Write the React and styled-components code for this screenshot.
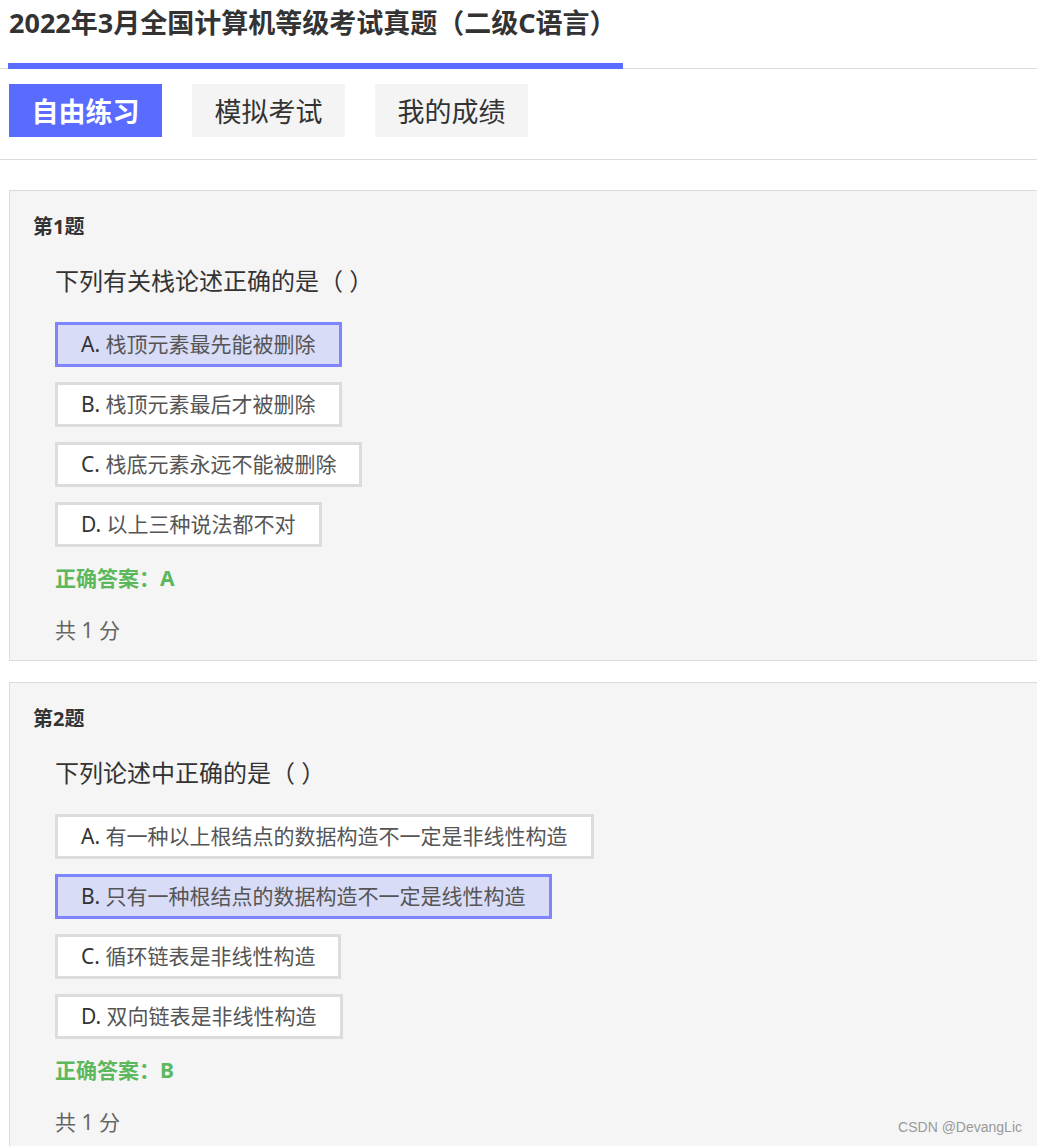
import React from "react";
import styled, { createGlobalStyle } from "styled-components";

const FONT = `"Noto Sans", "Noto Sans CJK SC", sans-serif`;

const GlobalStyle = createGlobalStyle`
  html, body {
    margin: 0;
    padding: 0;
    background: #fff;
    overflow-x: hidden;
  }
  body {
    font-family: ${FONT};
    color: #333;
  }
`;

const questions = [
  {
    no: 1,
    title: "下列有关栈论述正确的是（ ）",
    options: [
      "栈顶元素最先能被删除",
      "栈顶元素最后才被删除",
      "栈底元素永远不能被删除",
      "以上三种说法都不对",
    ],
    answer: "A",
    score: 1,
  },
  {
    no: 2,
    title: "下列论述中正确的是（ ）",
    options: [
      "有一种以上根结点的数据构造不一定是非线性构造",
      "只有一种根结点的数据构造不一定是线性构造",
      "循环链表是非线性构造",
      "双向链表是非线性构造",
    ],
    answer: "B",
    score: 1,
  },
];

const letters = ["A", "B", "C", "D"];

export default function App() {
  return (
    <>
      <GlobalStyle />
      <Page>
        <Header>
          <Title>2022年3月全国计算机等级考试真题（二级C语言）</Title>
        </Header>
        <TabBar>
          <Tab active>自由练习</Tab>
          <Tab>模拟考试</Tab>
          <Tab>我的成绩</Tab>
        </TabBar>
        <List>
          {questions.map((q) => (
            <Card key={q.no}>
              <Label>第{q.no}题</Label>
              <Question>{q.title}</Question>
              <Options>
                {q.options.map((text, i) => (
                  <Option key={i} selected={letters[i] === q.answer}>
                    <Letter>{letters[i]}.</Letter> {text}
                  </Option>
                ))}
              </Options>
              <Answer>正确答案：{q.answer}</Answer>
              <Score>共 {q.score} 分</Score>
            </Card>
          ))}
        </List>
        <Watermark>CSDN @DevangLic</Watermark>
      </Page>
    </>
  );
}

const Page = styled.div`
  position: relative;
  width: 100%;
  min-height: 1146px;
  overflow: hidden;
`;

const Header = styled.div`
  border-bottom: 1px solid #dcdcdc;
  padding-left: 8px;
`;

const Title = styled.div`
  display: inline-block;
  width: 615px;
  padding-left: 1px;
  box-sizing: border-box;
  font-size: 27px;
  font-weight: 700;
  line-height: 45px;
  color: #333;
  padding-bottom: 18px;
  border-bottom: 6px solid #5a6cff;
  margin-bottom: -1px;
  white-space: nowrap;
`;

const TabBar = styled.div`
  display: flex;
  gap: 30px;
  padding: 15px 0 22px 9px;
  border-bottom: 1px solid #dcdcdc;
`;

const Tab = styled.div`
  width: 153px;
  height: 53px;
  display: flex;
  align-items: center;
  justify-content: center;
  font-size: 27px;
  font-weight: ${(p) => (p.active ? 700 : 400)};
  color: ${(p) => (p.active ? "#fff" : "#333")};
  background: ${(p) => (p.active ? "#5a6cff" : "#f4f4f4")};
`;

const List = styled.div`
  display: flex;
  flex-direction: column;
  gap: 21px;
  padding: 30px 0 0 9px;
  margin-right: -20px;
`;

const Card = styled.div`
  background: #f5f5f5;
  border: 1px solid #dcdcdc;
  padding: 24px 0 15px 23px;
  display: flex;
  flex-direction: column;
  align-items: flex-start;
`;

const Label = styled.div`
  font-size: 20px;
  font-weight: 700;
  line-height: 24px;
  color: #333;
`;

const Question = styled.div`
  margin: 27px 0 0 22px;
  font-size: 24px;
  line-height: 30px;
  color: #333;
`;

const Options = styled.div`
  margin: 26px 0 0 22px;
  display: flex;
  flex-direction: column;
  align-items: flex-start;
  gap: 15px;
`;

const Option = styled.div`
  height: 39px;
  line-height: 39px;
  padding: 0 23px;
  font-size: 21px;
  color: #555;
  white-space: nowrap;
  background: ${(p) => (p.selected ? "#d8dcf7" : "#fff")};
  border: 3px solid ${(p) => (p.selected ? "#7d86ff" : "#dcdcdc")};
`;

const Letter = styled.span`
  color: #333;
`;

const Answer = styled.div`
  margin: 16px 0 0 22px;
  font-size: 21px;
  font-weight: 700;
  line-height: 30px;
  color: #5cb85c;
`;

const Score = styled.div`
  margin: 22px 0 0 22px;
  font-size: 21px;
  line-height: 30px;
  color: #666;
`;

const Watermark = styled.div`
  position: absolute;
  right: 15px;
  top: 1119px;
  font-family: "Liberation Sans", Arial, sans-serif;
  font-size: 14px;
  color: #999;
`;
